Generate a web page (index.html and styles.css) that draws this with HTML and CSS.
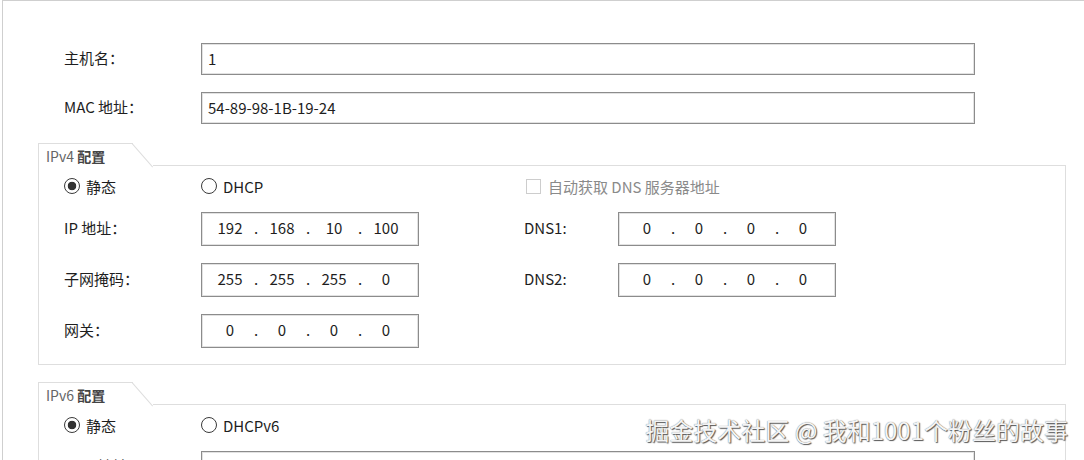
FILE: index.html
```html
<!DOCTYPE html>
<html lang="zh-CN">
<head>
    <meta charset="UTF-8">
    <title>PC 配置</title>
    <link rel="stylesheet" href="styles.css">
</head>
<body>
    <div class="window">
        <div class="panel">
            <div class="host-grid">
                <label class="label">主机名：</label>
                <div class="text-box">1</div>
                <label class="label">MAC 地址：</label>
                <div class="text-box">54-89-98-1B-19-24</div>
            </div>

            <!-- IPv4 -->
            <section class="group">
                <div class="group-head">
                    <span class="group-tab">IPv4 <b>配置</b></span>
                    <span class="group-rule"></span>
                </div>
                <div class="group-body ipv4-grid">
                    <span class="radio checked">静态</span>
                    <span class="radio">DHCP</span>
                    <span class="checkbox disabled">自动获取 DNS 服务器地址</span>

                    <label class="label">IP 地址：</label>
                    <div class="ip-box">
                        <span class="octet">192</span><span class="dot">.</span>
                        <span class="octet">168</span><span class="dot">.</span>
                        <span class="octet">10</span><span class="dot">.</span>
                        <span class="octet">100</span>
                    </div>
                    <label class="label dns-label">DNS1:</label>
                    <div class="ip-box">
                        <span class="octet">0</span><span class="dot">.</span>
                        <span class="octet">0</span><span class="dot">.</span>
                        <span class="octet">0</span><span class="dot">.</span>
                        <span class="octet">0</span>
                    </div>

                    <label class="label">子网掩码：</label>
                    <div class="ip-box">
                        <span class="octet">255</span><span class="dot">.</span>
                        <span class="octet">255</span><span class="dot">.</span>
                        <span class="octet">255</span><span class="dot">.</span>
                        <span class="octet">0</span>
                    </div>
                    <label class="label dns-label">DNS2:</label>
                    <div class="ip-box">
                        <span class="octet">0</span><span class="dot">.</span>
                        <span class="octet">0</span><span class="dot">.</span>
                        <span class="octet">0</span><span class="dot">.</span>
                        <span class="octet">0</span>
                    </div>

                    <label class="label">网关：</label>
                    <div class="ip-box">
                        <span class="octet">0</span><span class="dot">.</span>
                        <span class="octet">0</span><span class="dot">.</span>
                        <span class="octet">0</span><span class="dot">.</span>
                        <span class="octet">0</span>
                    </div>
                </div>
            </section>

            <!-- IPv6 -->
            <section class="group">
                <div class="group-head">
                    <span class="group-tab">IPv6 <b>配置</b></span>
                    <span class="group-rule"></span>
                </div>
                <div class="group-body ipv6-grid">
                    <span class="radio checked">静态</span>
                    <span class="radio">DHCPv6</span>
                    <label class="label">IPv6 地址：</label>
                    <div class="text-box"></div>
                </div>
            </section>
        </div>

        <div class="watermark">掘金技术社区 @ 我和1001个粉丝的故事</div>
    </div>
</body>
</html>
```

FILE: styles.css
```css
html, body {
    margin: 0;
    padding: 0;
    background: #fff;
}
body {
    font-family: "Noto Sans CJK SC", "Liberation Sans", sans-serif;
    font-size: 15px;
    color: #1e1e1e;
    width: 1084px;
    height: 460px;
    overflow: hidden;
}
.window {
    position: relative;
    height: 100%;
}
.panel {
    margin-left: 2px;
    border-top: 1px solid #cfcfcf;
    border-left: 1px solid #cfcfcf;
    padding: 42px 0 0 35px;
    height: 100%;
    box-sizing: border-box;
}

/* top rows */
.host-grid {
    display: grid;
    grid-template-columns: 137px 774px;
    grid-auto-rows: 32px;
    row-gap: 17px;
    align-items: center;
    padding-left: 26px;
}
.label {
    white-space: nowrap;
    line-height: 1;
    padding-bottom: 3px;
}
.text-box {
    height: 100%;
    box-sizing: border-box;
    border: 1px solid #8c8c8c;
    box-shadow: inset 0 0 0 1px #e2e2e2;
    padding: 0 6px 2px;
    display: flex;
    align-items: center;
    line-height: 1;
}

/* group boxes */
.group {
    width: 1028px;
    margin-top: 19px;
}
.group + .group {
    margin-top: 17px;
}
.group-head {
    display: flex;
    height: 23px;
}
.group-tab {
    position: relative;
    width: 87px;
    padding: 5px 0 0 7px;
    border-top: 1px solid #dedede;
    border-left: 1px solid #dedede;
    font-size: 14px;
    line-height: 1;
    color: #666;
    white-space: nowrap;
}
.group-tab b {
    color: #444;
}
.group-tab::after {
    content: "";
    position: absolute;
    right: -10px;
    top: -4px;
    width: 1px;
    height: 31px;
    background: #dedede;
    transform: rotate(-41deg);
}
.group-rule {
    flex: 1;
    margin-left: 20px;
    border-bottom: 1px solid #dedede;
}
.group-body {
    border: 1px solid #dedede;
    border-top: none;
    padding: 11px 0 16px 25px;
}

.ipv4-grid {
    display: grid;
    grid-template-columns: 137px 218px 105px 94px 218px;
    grid-template-rows: 18px repeat(3, 34px);
    row-gap: 17px;
    align-items: center;
}
.ipv4-grid .checkbox {
    grid-column: 4 / span 2;
    margin-left: 2px;
}
.ipv4-grid .dns-label {
    grid-column: 4;
}
.ipv6-grid {
    display: grid;
    grid-template-columns: 137px 774px;
    grid-template-rows: 18px 32px;
    row-gap: 17px;
    align-items: center;
}
.ipv6-grid .text-box {
    height: 32px;
}

/* ip address box */
.ip-box {
    height: 34px;
    box-sizing: border-box;
    border: 1px solid #8c8c8c;
    box-shadow: inset 0 0 0 1px #e2e2e2;
    display: flex;
    align-items: center;
    padding: 0 0 3px 10px;
    line-height: 1;
}
.octet {
    width: 36px;
    text-align: center;
}
.dot {
    width: 16px;
    text-align: center;
}

/* radios and checkbox */
.radio,
.checkbox {
    display: flex;
    align-items: center;
    white-space: nowrap;
    line-height: 1;
}
.radio::before {
    content: "";
    width: 16px;
    height: 16px;
    box-sizing: border-box;
    border: 1.5px solid #3a3a3a;
    border-radius: 50%;
    margin-right: 6px;
    background: #fff;
}
.radio.checked::before {
    background: radial-gradient(circle, #333 0 4px, #fff 4.6px);
}
.checkbox::before {
    content: "";
    width: 15px;
    height: 15px;
    box-sizing: border-box;
    border: 1px solid #cdcdcd;
    margin-right: 7px;
}
.checkbox.disabled {
    color: #8a8a8a;
}

.watermark {
    position: absolute;
    right: 16px;
    top: 418px;
    font-size: 24px;
    line-height: 1;
    color: #f4f4f4;
    text-shadow: 1px 1px 1px #555, 0 0 1px #666;
    white-space: nowrap;
}
```
